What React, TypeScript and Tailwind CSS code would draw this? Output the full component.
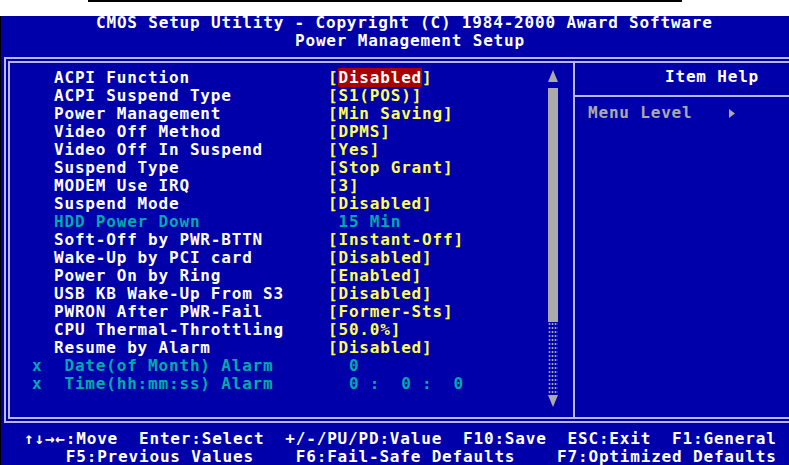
const rows = [
  { label: "ACPI Function", value: "Disabled", hl: true },
  { label: "ACPI Suspend Type", value: "S1(POS)" },
  { label: "Power Management", value: "Min Saving" },
  { label: "Video Off Method", value: "DPMS" },
  { label: "Video Off In Suspend", value: "Yes" },
  { label: "Suspend Type", value: "Stop Grant" },
  { label: "MODEM Use IRQ", value: "3" },
  { label: "Suspend Mode", value: "Disabled" },
  { label: "HDD Power Down", value: " 15 Min", dim: true },
  { label: "Soft-Off by PWR-BTTN", value: "Instant-Off" },
  { label: "Wake-Up by PCI card", value: "Disabled" },
  { label: "Power On by Ring", value: "Enabled" },
  { label: "USB KB Wake-Up From S3", value: "Disabled" },
  { label: "PWRON After PWR-Fail", value: "Former-Sts" },
  { label: "CPU Thermal-Throttling", value: "50.0%" },
  { label: "Resume by Alarm", value: "Disabled" },
  { label: " Date(of Month) Alarm", value: "  0", dim: true, x: true },
  { label: " Time(hh:mm:ss) Alarm", value: "  0 :  0 :  0", dim: true, x: true },
];

type Row = (typeof rows)[number] & { hl?: boolean; dim?: boolean; x?: boolean };

const SettingRow = ({ row }: { row: Row }) => {
  return (
    <div className="flex h-[18px] leading-[18px] whitespace-pre">
      <span className="w-[22px] text-[#00aaaa]">{row.x ? "x" : ""}</span>
      <span className={`w-[274px] ${row.dim ? "text-[#00aaaa]" : "text-white"}`}>{row.label}</span>
      {row.dim ? (
        <span className="text-[#00aaaa]">{row.value}</span>
      ) : (
        <span className="text-[#ffff55]">
          [
          {row.hl ? <span className="bg-[#aa0000] text-white">{row.value}</span> : row.value}]
        </span>
      )}
    </div>
  );
};

const ScrollBar = () => {
  return (
    <div className="flex w-[10px] flex-col pt-[7px]">
      <svg width="10" height="12" viewBox="0 0 10 12">
        <polygon points="5,0 10,12 0,12" fill="#aaaaaa" />
      </svg>
      <div className="mt-[6px] h-[234px] bg-[#aaaaaa]" />
      <div className="h-[71px] bg-[radial-gradient(circle,#aaaaaa_0.9px,transparent_1.2px)] bg-[length:3px_4px]" />
      <svg className="mt-[2px]" width="10" height="12" viewBox="0 0 10 12">
        <polygon points="0,0 10,0 5,12" fill="#aaaaaa" />
      </svg>
    </div>
  );
};

export default function App() {
  return (
    <div className="h-[465px] w-[789px] overflow-hidden bg-white font-['DejaVu_Sans_Mono',monospace] text-[16px] font-bold tracking-[0.82px]">
      <div className="h-[16px] bg-white">
        <div className="ml-[88px] h-[2px] w-[594px] bg-black" />
      </div>
      <div className="h-[449px] border-l border-black bg-[#0000aa] text-white">
        <div className="h-[14px] pl-[95px] leading-[14px] whitespace-pre">
          CMOS Setup Utility - Copyright (C) 1984-2000 Award Software
        </div>
        <div className="mt-[2px] h-[18px] pl-[294px] leading-[18px] whitespace-pre">Power Management Setup</div>

        <div className="mt-[7px] ml-[3px] flex h-[366px] w-[820px] border-[6px] border-double border-[#b8b8f4]">
          <div className="flex w-[563px]">
            <div className="flex-1 pt-[6px] pl-[22px]">
              {rows.map((r) => (
                <SettingRow key={r.label} row={r as Row} />
              ))}
            </div>
            <div className="mr-[15px]">
              <ScrollBar />
            </div>
          </div>
          <div className="flex-1 border-l-2 border-[#b8b8f4]">
            <div className="h-[34px] border-b-2 border-[#b8b8f4] pt-[5px] pl-[90px] leading-[18px]">Item Help</div>
            <div className="flex items-center pt-[7px] pl-[13px] leading-[18px] text-[#aaaaaa]">
              <span>Menu Level</span>
              <svg className="ml-[36px]" width="6" height="9" viewBox="0 0 6 9">
                <polygon points="0,0 6,4.5 0,9" fill="#aaaaaa" />
              </svg>
            </div>
          </div>
        </div>

        <div className="mt-[7px] h-[18px] pl-[23px] leading-[18px] whitespace-pre">
          ↑↓→←:Move  Enter:Select  +/-/PU/PD:Value  F10:Save  ESC:Exit  F1:General
        </div>
        <div className="h-[18px] pl-[23px] leading-[18px] whitespace-pre">
          {"    F5:Previous Values    F6:Fail-Safe Defaults    F7:Optimized Defaults"}
        </div>
      </div>
    </div>
  );
}
